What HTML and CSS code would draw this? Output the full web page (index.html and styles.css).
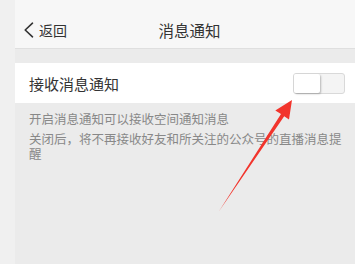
FILE: index.html
```html
<!DOCTYPE html>
<html lang="zh-CN">
<head>
    <meta charset="UTF-8">
    <meta name="viewport" content="width=device-width, initial-scale=1.0">
    <title>消息通知</title>
    <link rel="stylesheet" href="styles.css">
</head>
<body>
    <div class="screen">
        <div class="side"></div>

        <div class="phone">
            <!-- Nav Bar -->
            <div class="navbar">
                <div class="back">
                    <svg class="chevron" width="11" height="16" viewBox="0 0 11 16">
                        <path d="M9.5 1.2 L2.2 8 L9.5 14.8" fill="none" stroke="#333" stroke-width="1.6" stroke-linejoin="round" stroke-linecap="round"/>
                    </svg>
                    <span>返回</span>
                </div>
                <div class="title">消息通知</div>
                <div></div>
            </div>

            <!-- Setting Row -->
            <div class="row">
                <span class="label">接收消息通知</span>
                <div class="toggle">
                    <div class="knob"></div>
                </div>
            </div>

            <div class="desc">
                <p>开启消息通知可以接收空间通知消息</p>
                <p>关闭后，将不再接收好友和所关注的公众号的直播消息提醒</p>
            </div>
        </div>

        <!-- Annotation arrow -->
        <svg class="arrow" width="355" height="264" viewBox="0 0 355 264">
            <polygon points="292,100 289,119.5 284.2,116.3 218.5,212 281,114 275.3,110.6" fill="#f2342c"/>
        </svg>
    </div>
</body>
</html>
```

FILE: styles.css
```css
* {
    margin: 0;
    padding: 0;
    box-sizing: border-box;
    font-family: 'Noto Sans CJK SC', 'Noto Sans', sans-serif;
}

body {
    background: #ebebeb;
    width: 355px;
    height: 264px;
    overflow: hidden;
}

.screen {
    position: relative;
    display: flex;
    height: 264px;
}

.side {
    width: 15px;
    background: #f0f0f0;
}

.phone {
    flex: 1;
    background: #ebebeb;
}

.navbar {
    height: 49px;
    padding-top: 12px;
    background: #f7f7f7;
    border-bottom: 1px solid #dfdfdf;
    display: grid;
    grid-template-columns: 1fr auto 1fr;
    align-items: center;
    color: #333333;
}

.back {
    display: flex;
    align-items: center;
    gap: 5px;
    padding-left: 8px;
    font-size: 14px;
}

.title {
    font-size: 15.5px;
    padding-left: 9px;
}

.row {
    margin-top: 14px;
    height: 40px;
    background: white;
    display: flex;
    align-items: center;
    justify-content: space-between;
    padding: 0 10px 0 14px;
}

.label {
    font-size: 15px;
    color: #333333;
}

.toggle {
    width: 52px;
    height: 21px;
    border: 1px solid #d9d9d9;
    border-radius: 3px;
    background: #f4f4f4;
    display: flex;
}

.knob {
    width: 26px;
    height: 100%;
    background: white;
    border-radius: 2px;
    box-shadow: 1px 1px 2px rgba(0, 0, 0, 0.25);
}

.desc {
    padding: 8px 8px 0 14px;
    color: #888888;
    font-size: 12.5px;
    line-height: 15px;
}

.desc p {
    margin-bottom: 5px;
}

.arrow {
    position: absolute;
    left: 0;
    top: 0;
    pointer-events: none;
}
```
